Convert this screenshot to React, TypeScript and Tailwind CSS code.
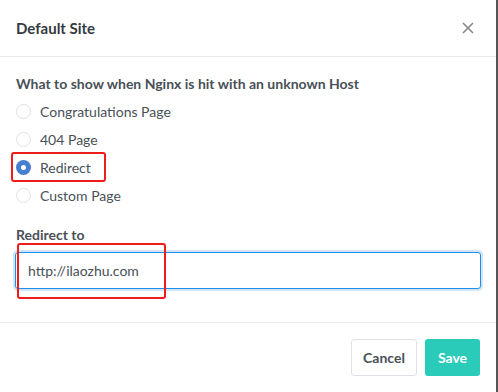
import React from "react";

const options = ["Congratulations Page", "404 Page", "Redirect", "Custom Page"];

export default function App() {
  return (
    <div
      className="w-[498px] h-[392px] bg-white border-r-2 border-[#555] flex flex-col text-[#495057]"
      style={{ fontFamily: "Lato, 'Noto Sans', sans-serif" }}
    >
      <div className="h-[57px] border-b border-[#e9ecef] flex items-center justify-between pl-4 pr-[22px] shrink-0">
        <div className="text-[15px] font-bold text-[#343a40]">Default Site</div>
        <svg width="12" height="12" viewBox="0 0 12 12" className="text-[#888]">
          <path d="M1 1L11 11M11 1L1 11" stroke="currentColor" strokeWidth="1.6" />
        </svg>
      </div>

      <div className="flex-1 px-4 pt-[17px] relative">
        <div className="text-[14px] font-bold text-[#495057] h-5 leading-5">
          What to show when Nginx is hit with an unknown Host
        </div>
        <div className="mt-[3px] flex flex-col">
          {options.map((o) => {
            const checked = o === "Redirect";
            return (
              <div key={o} className="h-7 flex items-center relative">
                {checked ? (
                  <span className="w-[15px] h-[15px] rounded-full bg-[#467fcf] flex items-center justify-center">
                    <span className="w-[5px] h-[5px] rounded-full bg-white" />
                  </span>
                ) : (
                  <span className="w-[15px] h-[15px] rounded-full border border-[#dee2e6] bg-white" />
                )}
                <span className="ml-[9px] text-[14px] text-[#495057]">{o}</span>
                {checked && (
                  <span className="absolute left-[-5px] top-[-1px] w-[95px] h-[30px] border-2 border-[#ef1c1c] rounded-[3px]" />
                )}
              </div>
            );
          })}
        </div>

        <div className="mt-[16px] text-[14px] font-bold text-[#495057] h-5 leading-5">Redirect to</div>
        <div className="mt-[7px] relative">
          <div className="h-[37px] w-[466px] -ml-px border border-[#1c8fe8] rounded-[3px] shadow-[0_0_0_2px_#d3e4f6] flex items-center pl-[12px] text-[14px] text-[#495057]">
            http://ilaozhu.com
          </div>
          <span className="absolute left-[1px] top-[-9px] w-[149px] h-[56px] border-2 border-[#ef1c1c] rounded-[3px]" />
        </div>
      </div>

      <div className="h-[70px] border-t border-[#e9ecef] flex items-start justify-end gap-[8px] pr-[16px] pt-[16px] shrink-0">
        <button className="h-[37px] w-[66px] border border-[#dee2e6] rounded-[3px] bg-white text-[14px] font-bold text-[#495057]">
          Cancel
        </button>
        <button className="h-[37px] w-[55px] rounded-[3px] bg-[#2bcbba] text-[14px] font-bold text-white">
          Save
        </button>
      </div>
    </div>
  );
}
